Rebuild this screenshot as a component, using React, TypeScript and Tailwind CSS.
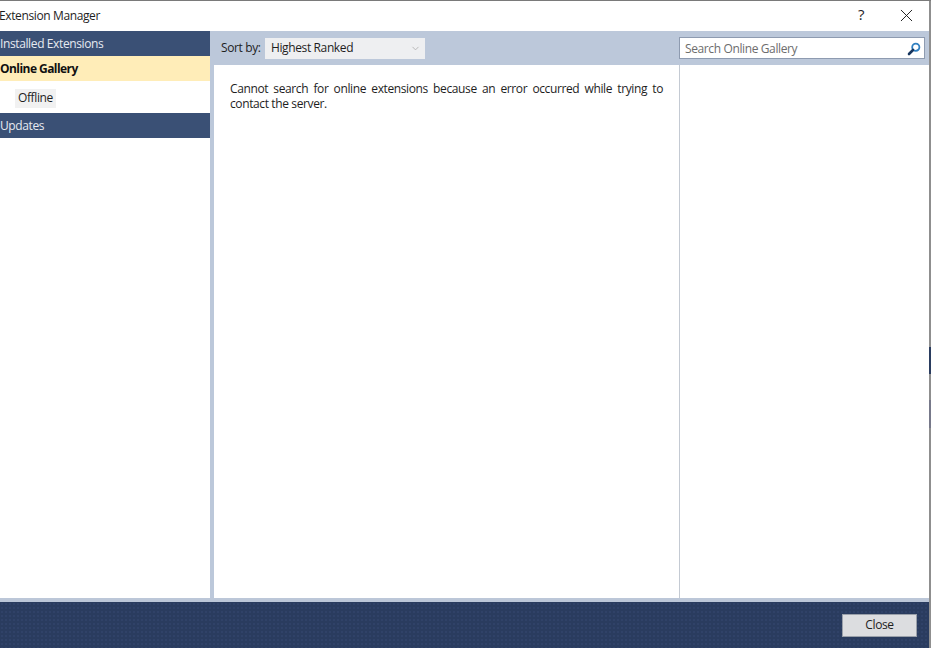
import { ChevronDown, X } from "lucide-react";

function SideHeader({ label }: { label: string }) {
  return <div className="h-[25px] pt-px bg-[#3a5075] text-[#e6eaf1] flex items-center">{label}</div>;
}

function SearchIcon() {
  return (
    <svg width="14" height="14" viewBox="0 0 14 14" fill="none">
      <circle cx="8.8" cy="5.2" r="3.6" stroke="#2f7fc0" strokeWidth="1.8" />
      <path d="M6 8 L2 12" stroke="#17365f" strokeWidth="2.6" strokeLinecap="round" />
    </svg>
  );
}

function App() {
  return (
    <div className="w-[931px] h-[648px] flex overflow-hidden bg-white border-t border-t-[#7a7a7a] text-[12px] text-[#1e1e1e] font-['Open_Sans','Noto_Sans',sans-serif] tracking-[-0.38px]">
      <div className="flex-1 min-w-0 flex flex-col">
        <div className="h-[30px] flex items-center justify-between shrink-0">
          <span className="-ml-px">Extension Manager</span>
          <div className="flex items-center -mt-px">
            <span className="text-[15px] font-medium w-[12px] text-center mr-[29px] -mt-[2px]">?</span>
            <X size={21} strokeWidth={1.1} className="mr-[12px]" />
          </div>
        </div>

        <div className="flex-1 flex min-h-0">
          <aside className="w-[210px] shrink-0 flex flex-col">
            <SideHeader label="Installed Extensions" />
            <div className="h-[25px] pt-px bg-[#ffedb8] font-bold tracking-[-0.55px] flex items-center text-[#111]">Online Gallery</div>
            <div className="h-[32px] flex items-center pl-[15px] pt-[2px]">
              <span className="bg-[#f1f1f1] px-[3px] h-[19px] flex items-center">Offline</span>
            </div>
            <SideHeader label="Updates" />
          </aside>

          <main className="flex-1 flex flex-col min-w-0">
            <div className="h-[34px] bg-[#bcc8da] flex items-center pl-[11px] pr-[4px] shrink-0">
              <span className="w-[44px]">Sort by:</span>
              <div className="w-[160px] h-[21px] bg-[#eeeff1] flex items-center justify-between pl-[6px] pr-[4px]">
                <span>Highest Ranked</span>
                <ChevronDown size={11} className="text-[#b4b4b4]" />
              </div>
              <div className="ml-auto w-[246px] h-[22px] bg-white border border-[#8e9bb0] flex items-center justify-between pl-[5px] pr-[3px] pt-px text-[#6d6d6d]">
                <span>Search Online Gallery</span>
                <SearchIcon />
              </div>
            </div>

            <div className="flex-1 flex min-h-0 border-l-4 border-l-[#bcc8da]">
              <div className="w-[465px] pt-[16px] px-[16px] leading-[15px] text-justify">
                Cannot search for online extensions because an error occurred while trying to contact the server.
              </div>
              <div className="flex-1 border-l border-l-[#c4cad3]" />
            </div>
          </main>
        </div>

        <div className="h-[50px] shrink-0 border-t-4 border-t-[#bcc7d8] bg-[#2a3c5f] bg-[radial-gradient(#304268_1px,transparent_1px)] bg-[length:4px_4px] flex items-center justify-end pr-[12px]">
          <button className="w-[75px] h-[23px] bg-[#dcdde0] border border-[#9aa0aa] flex items-center justify-center">Close</button>
        </div>
      </div>

      {/* window edge, with the app behind showing through */}
      <div className="w-[2px] shrink-0 flex flex-col bg-[#8f8f8f]">
        <div className="h-[346px]" />
        <div className="h-[27px] bg-[#2a3c5f]" />
        <div className="h-[26px]" />
        <div className="h-[28px] bg-[#77798a]" />
      </div>
    </div>
  );
}

export default App;
